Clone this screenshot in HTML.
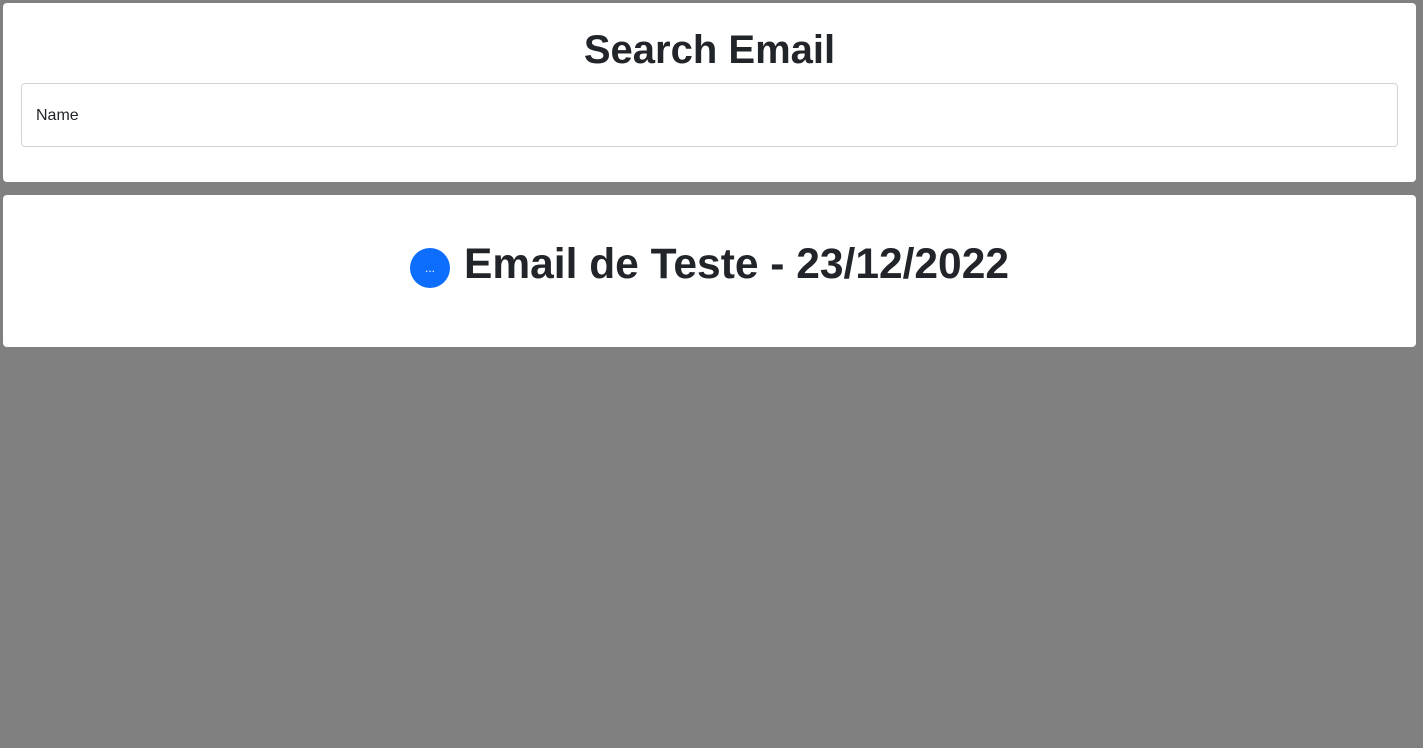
<!DOCTYPE html>
<html><head><style>
body{margin:0;background:#808080;font-family:"Liberation Sans",sans-serif;color:#212529;width:1423px;height:748px;overflow:hidden}
.card{position:absolute;left:3px;width:1413px;background:#fff;border-radius:4px}
h1{margin:0;position:absolute;left:0;right:0;text-align:center;font-weight:700;font-size:40px;}
.inp{position:absolute;left:18px;top:80px;width:1377px;height:64px;border:1px solid #ced4da;border-radius:4px;box-sizing:border-box;font-size:16px;padding:23px 14px}
.row{position:absolute;left:0;right:0;top:46px;display:flex;justify-content:center;align-items:center;font-size:42.5px;font-weight:700}
.dot{width:40px;height:40px;border-radius:50%;background:#0d6efd;color:#fff;font-size:12px;display:flex;align-items:center;justify-content:center;margin-right:14px;margin-top:6px;font-weight:400}
</style></head><body>
<div class="card" style="top:3px;height:179px">
<h1 style="top:24px;line-height:46px">Search Email</h1>
<div class="inp">Name</div>
</div>
<div class="card" style="top:195px;height:152px">
<div class="row"><div class="dot">...</div>Email de Teste - 23/12/2022</div>
</div>
</body></html>
